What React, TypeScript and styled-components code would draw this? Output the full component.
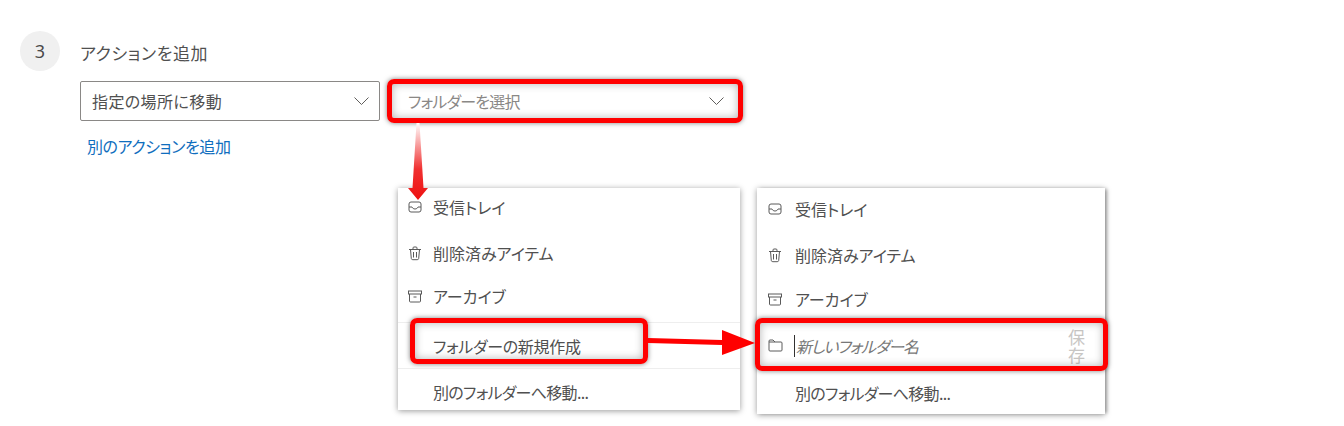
import styled, { createGlobalStyle } from "styled-components";

const GlobalStyle = createGlobalStyle`
  html, body {
    margin: 0;
    background: #ffffff;
    overflow: hidden;
  }
  body {
    font-family: "Noto Sans CJK JP", "Liberation Sans", sans-serif;
    font-feature-settings: "palt";
    color: #323130;
  }
`;

const Page = styled.div`
  position: relative;
  width: 1344px;
  height: 426px;
  padding: 31px 0 0 20px;
  box-sizing: border-box;
`;

const StepRow = styled.div`
  display: flex;
  align-items: flex-start;
  gap: 20px;
  height: 48px;
`;

const StepBadge = styled.div`
  width: 40px;
  height: 40px;
  border-radius: 50%;
  background: #f0f0f0;
  display: flex;
  align-items: center;
  justify-content: center;
  font-family: "Noto Sans", sans-serif;
  font-size: 18px;
  color: #4a4a4a;
`;

const StepTitle = styled.div`
  font-size: 17px;
  line-height: 44px;
  letter-spacing: 0.6px;
  color: #505050;
`;

const Fields = styled.div`
  display: flex;
  align-items: center;
  margin-left: 60px;
  gap: 7px;
`;

const Select = styled.div`
  width: 300px;
  height: 40px;
  box-sizing: border-box;
  border: 1px solid #8a8886;
  border-radius: 2px;
  padding: 0 10px 0 11px;
  display: flex;
  align-items: center;
  justify-content: space-between;
  font-size: 16px;
  letter-spacing: 0.4px;
  color: #505050;
`;

const HighlightSelect = styled(Select)<{ $w: number }>`
  width: ${(p) => p.$w}px;
  height: 44px;
  border: 5px solid #ff0000;
  border-radius: 7px;
  padding: 0 14px 0 16px;
  color: #8a8886;
  letter-spacing: -0.8px;
  box-shadow: 0 0 5px rgba(0, 0, 0, 0.5), inset 0 0 8px rgba(0, 0, 0, 0.3);
`;

const AddLink = styled.a`
  display: block;
  margin: 11px 0 0 67px;
  font-size: 16px;
  line-height: 24px;
  letter-spacing: -0.4px;
  color: #106ebe;
`;

const Menus = styled.div`
  display: flex;
  align-items: flex-start;
  gap: 17px;
  margin: 30px 0 0 378px;
`;

const Menu = styled.div<{ $w: number; $h: number; $gutter?: boolean }>`
  width: ${(p) => p.$w}px;
  height: ${(p) => p.$h}px;
  background: #fff;
  box-shadow: ${(p) => (p.$gutter ? "3px 0 3px -1px rgba(0, 0, 0, 0.25), " : "")}0 1px 6px rgba(0, 0, 0, 0.4);
  display: flex;
  flex-direction: column;
`;

const Item = styled.div<{
  $h: number;
  $divider?: boolean;
  $pt?: number;
  $pb?: number;
  $pl?: number;
}>`
  position: relative;
  height: ${(p) => p.$h}px;
  flex-shrink: 0;
  display: flex;
  align-items: center;
  padding: ${(p) => p.$pt ?? 0}px 0 ${(p) => p.$pb ?? 0}px ${(p) => p.$pl ?? 10}px;
  font-size: 16px;
  color: #505050;
  border-top: ${(p) => (p.$divider ? "1px solid #eeeeee" : "none")};
  box-sizing: border-box;
`;

const Label = styled.span<{ $ls?: number }>`
  letter-spacing: ${(p) => p.$ls ?? 0}px;
`;

const IconSlot = styled.span<{ $w?: number }>`
  width: ${(p) => p.$w ?? 25}px;
  flex-shrink: 0;
  display: flex;
  align-items: center;
  color: #5a5a5a;
`;

const NameInput = styled.input`
  width: 240px;
  height: 22px;
  padding: 0 0 0 1px;
  margin-left: 0;
  border: none;
  border-left: 1px solid #323130;
  outline: none;
  background: transparent;
  font: italic 16px "Noto Sans CJK JP", "Liberation Sans", sans-serif;
  font-feature-settings: "palt";
  letter-spacing: -1.1px;

  &::placeholder {
    color: #777;
    opacity: 1;
  }
`;

const SaveButton = styled.span`
  position: absolute;
  right: 19px;
  top: 5px;
  width: 18px;
  font-size: 17px;
  line-height: 18px;
  color: #c8c6c4;
`;

const Callout = styled.div<{ $l: number; $t: number; $w: number; $h: number }>`
  position: absolute;
  left: ${(p) => p.$l}px;
  top: ${(p) => p.$t}px;
  width: ${(p) => p.$w}px;
  height: ${(p) => p.$h}px;
  box-sizing: border-box;
  border: 5px solid #ff0000;
  border-radius: 7px;
  box-shadow: 0 0 5px rgba(0, 0, 0, 0.5), inset 0 0 8px rgba(0, 0, 0, 0.3);
  pointer-events: none;
`;

const Arrows = styled.svg`
  position: absolute;
  left: 0;
  top: 0;
  pointer-events: none;
`;

const Chevron = () => (
  <svg width="15" height="8" viewBox="0 0 15 8" fill="none" stroke="#605e5c" strokeWidth="1">
    <path d="M.5.5l7 7 7-7" />
  </svg>
);

const InboxIcon = () => (
  <svg width="14" height="14" viewBox="0 0 14 14" fill="none" stroke="currentColor" strokeWidth="1">
    <rect x="1" y="2" width="12" height="10" rx="2" />
    <path d="M1 7h3c.5 1.2 1.6 2 3 2s2.500-.8 3-2h3" />
  </svg>
);

const TrashIcon = () => (
  <svg width="14" height="15" viewBox="0 0 14 15" fill="none" stroke="currentColor" strokeWidth="1">
    <path d="M1 3.500h12M5 3.500V2a1 1 0 0 1 1-1h2a1 1 0 0 1 1 1v1.500" />
    <path d="M2.500 3.500l.8 9a1.500 1.500 0 0 0 1.500 1.200h4.400a1.500 1.500 0 0 0 1.500-1.200l.8-9" />
    <path d="M5.500 6v5.500M8.500 6v5.500" />
  </svg>
);

const ArchiveIcon = () => (
  <svg width="14" height="13" viewBox="0 0 14 13" fill="none" stroke="currentColor" strokeWidth="1">
    <rect x="0.5" y="1" width="13" height="3" />
    <path d="M1.500 4v7a1 1 0 0 0 1 1h9a1 1 0 0 0 1-1V4M5.500 7h3" />
  </svg>
);

const FolderIcon = () => (
  <svg width="15" height="13" viewBox="0 0 15 13" fill="none" stroke="currentColor" strokeWidth="1">
    <path d="M1 3V2a1 1 0 0 1 1-1h3l2 2h6a1 1 0 0 1 1 1v7a1 1 0 0 1-1 1H2a1 1 0 0 1-1-1V3h6" />
  </svg>
);

const folderItems = [
  { label: "受信トレイ", icon: <InboxIcon /> },
  { label: "削除済みアイテム", icon: <TrashIcon /> },
  { label: "アーカイブ", icon: <ArchiveIcon /> },
];

// row heights and nudges per menu, the two menus do not line up exactly
const leftRows = [
  { h: 44, pb: 6 },
  { h: 44, pb: 2 },
  { h: 46, pb: 6 },
];
const rightRows = [
  { h: 45, pb: 4 },
  { h: 46, pb: 2 },
  { h: 44, pb: 4 },
];

export default function App() {
  return (
    <Page>
      <GlobalStyle />
      <StepRow>
        <StepBadge>3</StepBadge>
        <StepTitle>アクションを追加</StepTitle>
      </StepRow>
      <Fields>
        <Select>
          指定の場所に移動
          <Chevron />
        </Select>
        <HighlightSelect $w={356}>
          フォルダーを選択
          <Chevron />
        </HighlightSelect>
      </Fields>
      <AddLink>別のアクションを追加</AddLink>
      <Menus>
        <Menu $w={342} $h={222}>
          {folderItems.map((f, i) => (
            <Item key={f.label} $h={leftRows[i].h} $pb={leftRows[i].pb}>
              <IconSlot>{f.icon}</IconSlot>
              {f.label}
            </Item>
          ))}
          <Item $h={46} $divider>
            <IconSlot />
            <Label $ls={-0.3}>フォルダーの新規作成</Label>
            <Callout $l={12} $t={-5} $w={238} $h={46} />
          </Item>
          <Item $h={42} $divider $pt={4}>
            <IconSlot />
            <Label $ls={-0.7}>別のフォルダーへ移動...</Label>
          </Item>
        </Menu>
        <Menu $w={348} $h={226} $gutter>
          {folderItems.map((f, i) => (
            <Item key={f.label} $h={rightRows[i].h} $pb={rightRows[i].pb} $pl={11}>
              <IconSlot $w={27}>{f.icon}</IconSlot>
              {f.label}
            </Item>
          ))}
          <Item $h={47} $pb={2} $pl={11}>
            <IconSlot $w={26}>
              <FolderIcon />
            </IconSlot>
            <NameInput placeholder="新しいフォルダー名" readOnly />
            <SaveButton>保存</SaveButton>
            <Callout $l={-2} $t={-5} $w={353} $h={53} />
          </Item>
          <Item $h={44} $pt={2} $pl={11}>
            <IconSlot $w={27} />
            <Label $ls={-0.7}>別のフォルダーへ移動...</Label>
          </Item>
        </Menu>
      </Menus>
      <Arrows width="1344" height="426" viewBox="0 0 1344 426">
        <defs>
          <linearGradient id="down" x1="0" y1="0" x2="0" y2="1">
            <stop offset="0" stopColor="#ffffff" />
            <stop offset="0.6" stopColor="#f03030" />
            <stop offset="1" stopColor="#ee1111" />
          </linearGradient>
        </defs>
        <path d="M416.500 123l-4 65H408l10 12 10-12h-4.500l-4-65z" fill="url(#down)" />
        <path d="M648 338l74 2v-10l33 13-33 12v-10l-74-2z" fill="#ff0000" />
      </Arrows>
    </Page>
  );
}
